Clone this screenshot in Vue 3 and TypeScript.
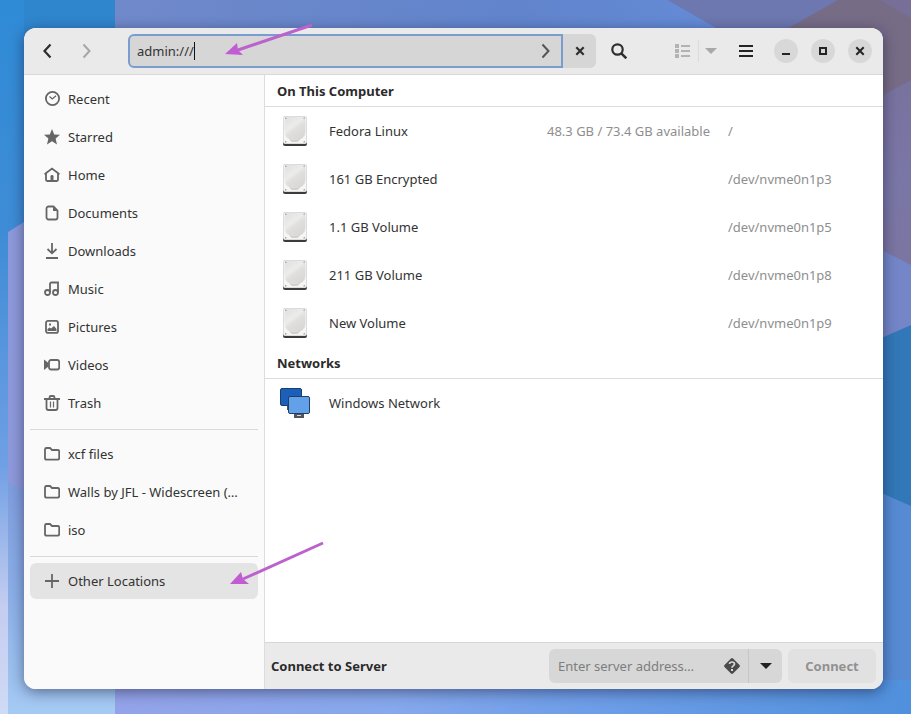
<script setup lang="ts">
import { ref } from 'vue'

interface Place {
  label: string
  icon: string
  active?: boolean
}

interface Volume {
  name: string
  free: string
  path: string
}

const address = ref<string>('admin:///')
const server = ref<string>('')

const placeGroups: Place[][] = [
  [
    { label: 'Recent', icon: 'recent' },
    { label: 'Starred', icon: 'star' },
    { label: 'Home', icon: 'home' },
    { label: 'Documents', icon: 'document' },
    { label: 'Downloads', icon: 'download' },
    { label: 'Music', icon: 'music' },
    { label: 'Pictures', icon: 'picture' },
    { label: 'Videos', icon: 'video' },
    { label: 'Trash', icon: 'trash' },
  ],
  [
    { label: 'xcf files', icon: 'folder' },
    { label: 'Walls by JFL - Widescreen (…', icon: 'folder' },
    { label: 'iso', icon: 'folder' },
  ],
  [{ label: 'Other Locations', icon: 'plus', active: true }],
]

const volumes: Volume[] = [
  { name: 'Fedora Linux', free: '48.3 GB / 73.4 GB available', path: '/' },
  { name: '161 GB Encrypted', free: '', path: '/dev/nvme0n1p3' },
  { name: '1.1 GB Volume', free: '', path: '/dev/nvme0n1p5' },
  { name: '211 GB Volume', free: '', path: '/dev/nvme0n1p8' },
  { name: 'New Volume', free: '', path: '/dev/nvme0n1p9' },
]
</script>

<template>
  <div class="desktop">
    <svg class="wallpaper" viewBox="0 0 911 714" preserveAspectRatio="none" aria-hidden="true">
      <defs>
        <linearGradient id="wall-top" x1="0" x2="1" y1="0" y2="0">
          <stop offset="0" stop-color="#7089ca" />
          <stop offset="0.5" stop-color="#6184cc" />
          <stop offset="0.75" stop-color="#648bd6" />
          <stop offset="1" stop-color="#6d86c4" />
        </linearGradient>
        <linearGradient id="wall-left" x1="0" x2="0" y1="0" y2="1">
          <stop offset="0" stop-color="#2f8bd6" />
          <stop offset="0.33" stop-color="#3f8cd6" />
          <stop offset="0.65" stop-color="#6f9fe4" />
          <stop offset="0.85" stop-color="#c5cdf0" />
          <stop offset="1" stop-color="#cfdaf4" />
        </linearGradient>
        <linearGradient id="wall-left-low" x1="0" x2="0" y1="0" y2="1">
          <stop offset="0" stop-color="#7f9cdc" />
          <stop offset="0.5" stop-color="#8bb0e8" />
          <stop offset="1" stop-color="#a5caf3" />
        </linearGradient>
        <linearGradient id="wall-bottom" x1="0" x2="1" y1="0" y2="0">
          <stop offset="0" stop-color="#94a3e9" />
          <stop offset="0.35" stop-color="#86a8ec" />
          <stop offset="0.55" stop-color="#719fe8" />
          <stop offset="1" stop-color="#5090dc" />
        </linearGradient>
        <linearGradient id="wall-right" x1="0" x2="0" y1="0" y2="1">
          <stop offset="0" stop-color="#776f98" />
          <stop offset="0.5" stop-color="#7a76a6" />
          <stop offset="1" stop-color="#7c7499" />
        </linearGradient>
      </defs>
      <rect width="911" height="714" fill="url(#wall-left)" />
      <path d="M8 232 24 222V500L8 482Z" fill="#8d99da" />
      <path d="M8 482 115 540V714H8Z" fill="url(#wall-left-low)" />
      <path d="M24 0H115V40H24Z" fill="#2f86cd" />
      <path d="M115 0H911V110H115Z" fill="url(#wall-top)" />
      <path d="M668 0H911V370H860V110Z" fill="url(#wall-right)" />
      <path d="M668 0H838L790 30H720Z" fill="#6d78b0" />
      <path d="M838 0H880L911 18V80L883 95V30H785Z" fill="#776c86" />
      <path d="M870 244 911 265V340H870Z" fill="#7486c8" />
      <path d="M870 343 911 325V714H870Z" fill="#3278b8" />
      <path d="M870 488 911 506V714H870Z" fill="#568bd4" />
      <path d="M115 680H911V714H115Z" fill="url(#wall-bottom)" />
    </svg>

    <main class="window">
      <header class="headerbar">
        <button class="flat" type="button" aria-label="Back">
          <svg class="ico" viewBox="0 0 16 16"><path d="M11.500 1.500 5.500 8l6 6.500" fill="none" stroke="#2e2e2e" stroke-width="2.200" /></svg>
        </button>
        <button class="flat dim" type="button" aria-label="Forward" disabled>
          <svg class="ico" viewBox="0 0 16 16"><path d="m4.500 1.500 6 6.500-6 6.500" fill="none" stroke="#a6a6a6" stroke-width="2" /></svg>
        </button>
        <form class="location" @submit.prevent>
          <div class="location-entry">
            <input v-model="address" type="text" aria-label="Location" />
            <span class="caret"></span>
            <button type="submit" aria-label="Go">
              <svg class="ico" viewBox="0 0 16 16"><path d="m4.500 1.500 6 6.500-6 6.500" fill="none" stroke="#555" stroke-width="2" /></svg>
            </button>
          </div>
          <button class="location-close" type="button" aria-label="Cancel">
            <svg class="ico" viewBox="0 0 16 16"><path d="m4.300 4.300 7.400 7.400m0-7.400-7.400 7.400" stroke="#2e2e2e" stroke-width="2.200" /></svg>
          </button>
        </form>
        <button class="flat search" type="button" aria-label="Search">
          <svg class="ico" viewBox="0 0 16 16"><circle cx="6.500" cy="6.500" r="5.200" fill="none" stroke="#2e2e2e" stroke-width="2.200" /><path d="m10.300 10.300 5 5" stroke="#2e2e2e" stroke-width="2.500" /></svg>
        </button>
        <div class="view-switch">
          <button type="button" aria-label="List view" disabled>
            <svg class="ico" viewBox="0 0 16 16" fill="#b3b3b3"><path d="M1 1h4v4H1zM1 6h4v4H1zM1 11h4v4H1zM7 2h9v2H7zM7 7h9v2H7zM7 12h9v2H7z" /></svg>
          </button>
          <button class="view-menu" type="button" aria-label="View options" disabled>
            <svg class="arrow" viewBox="0 0 12 6"><path d="M0 0h12L6 6z" fill="#a9a9a9" /></svg>
          </button>
        </div>
        <button class="flat menu" type="button" aria-label="Menu">
          <svg class="ico" viewBox="0 0 16 16"><path d="M1 3h14M1 8h14M1 13h14" stroke="#242424" stroke-width="2" /></svg>
        </button>
        <div class="window-controls">
          <button type="button" aria-label="Minimize">
            <svg class="ico" viewBox="0 0 16 16"><path d="M4 11h8" stroke="#242424" stroke-width="2" /></svg>
          </button>
          <button type="button" aria-label="Maximize">
            <svg class="ico" viewBox="0 0 16 16"><path d="M5 5h6v6H5z" fill="none" stroke="#242424" stroke-width="2" /></svg>
          </button>
          <button type="button" aria-label="Close">
            <svg class="ico" viewBox="0 0 16 16"><path d="m4.300 4.300 7.400 7.400m0-7.400-7.400 7.400" stroke="#242424" stroke-width="2" /></svg>
          </button>
        </div>
      </header>

      <div class="body">
        <nav class="sidebar" aria-label="Places">
          <ul v-for="(group, g) in placeGroups" :key="g">
            <li v-for="place in group" :key="place.label">
              <a href="#" :class="{ active: place.active }" @click.prevent>
                <svg class="ico" viewBox="0 0 16 16" fill="none" stroke="#666" stroke-width="1.800">
                  <template v-if="place.icon === 'recent'">
                    <circle cx="8.500" cy="7.500" r="6.600" /><path d="m5.500 5.500 2.800 2.500 3.700-3.300" stroke-width="1.300" />
                  </template>
                  <path v-else-if="place.icon === 'star'" d="m8 0 2.200 5.400 5.800.4-4.400 3.700 1.400 5.900-5-3.200-5 3.200 1.400-5.900L0 5.800l5.800-.4z" fill="#666" stroke="none" />
                  <template v-else-if="place.icon === 'home'">
                    <path d="M1.500 6.500 8 1.600l6.500 4.900M.600 7.500 2 6.200v6.300A1.500 1.500 0 0 0 3.500 14h9a1.500 1.500 0 0 0 1.500-1.500V6.200l1.400 1.300" />
                    <path d="M6.500 14V9.200Q6.500 8 8 8t1.500 1.200V14z" fill="#666" stroke="none" />
                  </template>
                  <template v-else-if="place.icon === 'document'">
                    <path d="M4.500 1.500H9.500L13.500 5.500V12.500a2 2 0 0 1-2 2H4.500a2 2 0 0 1-2-2v-9a2 2 0 0 1 2-2z" /><path d="M9 1v5h5z" fill="#666" stroke="none" />
                  </template>
                  <path v-else-if="place.icon === 'download'" d="M8 0v10M3.500 6 8 10.300 12.500 6M2 15h12" />
                  <template v-else-if="place.icon === 'music'">
                    <circle cx="3.500" cy="11.500" r="2.500" /><circle cx="11.500" cy="11.500" r="2.500" />
                    <path d="M6 11.500V3a1.500 1.500 0 0 1 1.500-1.500H14v10" />
                  </template>
                  <template v-else-if="place.icon === 'picture'">
                    <rect x="2" y="1.900" width="12" height="12" rx="2" />
                    <path d="M3.500 12V10l2-1.500 1.500 1 3-2.500 2.500 3v2zM5 4.500h2v2H5z" fill="#666" stroke="none" />
                  </template>
                  <template v-else-if="place.icon === 'video'">
                    <rect x="5" y="3" width="10.200" height="9.500" rx="2" /><path d="M0 2.500 4.500 6v3.500L0 13z" fill="#666" stroke="none" />
                  </template>
                  <template v-else-if="place.icon === 'trash'">
                    <path d="M0 4h16M5.500 3.500V2.500a1.500 1.500 0 0 1 1.500-1.500h2a1.500 1.500 0 0 1 1.500 1.500v1M2.500 4v9a2 2 0 0 0 2 2h7a2 2 0 0 0 2-2V4" /><path d="M6.500 6.500v6M9.500 6.500v6" stroke-width="1.200" />
                  </template>
                  <path v-else-if="place.icon === 'folder'" d="M1 12V3.500A1.500 1.500 0 0 1 2.500 2H6l2 2H14a1.300 1.300 0 0 1 1.200 1.300V12a1.700 1.700 0 0 1-1.700 1.700H2.700A1.700 1.700 0 0 1 1 12z" stroke-width="1.800" />
                  <path v-else d="M8 1v14M1 8h14" />
                </svg>
                <span>{{ place.label }}</span>
              </a>
            </li>
          </ul>
        </nav>

        <section class="content">
          <h2>On This Computer</h2>
          <table aria-label="On This Computer">
            <tbody>
              <tr v-for="volume in volumes" :key="volume.name">
                <td class="icon-cell">
                  <svg class="device" viewBox="0 0 32 32" aria-hidden="true">
                    <defs>
                      <linearGradient id="platter" x1="0" y1="0" x2="0.700" y2="1">
                        <stop offset="0" stop-color="#dfdfde" /><stop offset="0.450" stop-color="#ececeb" /><stop offset="0.600" stop-color="#e0dfde" /><stop offset="1" stop-color="#d8d7d6" />
                      </linearGradient>
                    </defs>
                    <rect x="4" y="4" width="24" height="27" rx="2" fill="#3c3c3c" />
                    <rect x="4" y="1" width="24" height="28" rx="2" fill="#dcdcda" />
                    <rect x="5" y="2" width="22" height="26" rx="1" fill="#f6f6f5" />
                    <path d="M9 2h14q3.500 0 3.500 5v9q0 9-10.500 9T5.500 16V7Q5.500 2 9 2z" fill="url(#platter)" />
                    <path d="M10 24q6 2.500 12-.5l-3 3q-3.500 1.200-7 0z" fill="#cfcecd" />
                    <path d="M6 2.500h1.500V4H6zM24.500 2.500H26V4h-1.500zM6 26h1.500v1.500H6zM24.500 26H26v1.500h-1.500z" fill="#aaa" />
                  </svg>
                </td>
                <td class="name">{{ volume.name }}</td>
                <td class="free">{{ volume.free }}</td>
                <td class="path">{{ volume.path }}</td>
              </tr>
            </tbody>
          </table>
          <h2>Networks</h2>
          <table aria-label="Networks">
            <tbody>
              <tr>
                <td class="icon-cell">
                  <svg class="device" viewBox="0 0 32 32" aria-hidden="true">
                    <path d="M8 19h5v4H8z" fill="#4b5158" />
                    <rect x="1.500" y="1.500" width="21" height="17" rx="1.500" fill="#1c5fb8" stroke="#17406f" />
                    <path d="M15 27h10v4H15z" fill="#50565c" /><path d="M18 28h4v1h-4z" fill="#d5d8dc" />
                    <rect x="9.500" y="9.500" width="21" height="17" rx="1.500" fill="#62a0ea" stroke="#1d3f69" />
                  </svg>
                </td>
                <td class="name">Windows Network</td>
                <td class="free"></td>
                <td class="path"></td>
              </tr>
            </tbody>
          </table>
          <form class="connect-bar" @submit.prevent>
            <label for="server-address">Connect to Server</label>
            <div class="server">
              <input id="server-address" v-model="server" type="text" placeholder="Enter server address…" />
              <button class="help" type="button" aria-label="Address help">
                <svg class="ico" viewBox="0 0 16 16"><path d="M7 .5q1-.9 2 0L15.500 7q.9 1 0 2L9 15.500q-1 .9-2 0L.500 9q-.9-1 0-2z" fill="#4a4a4a" /><path d="M5.500 6q.2-2 2.500-2t2.500 2q0 1-1.300 1.900Q8.100 8.600 8 9.800" fill="none" stroke="#dadada" stroke-width="1.700" /><path d="M7 11h2v2H7z" fill="#dadada" /></svg>
              </button>
              <button class="recent-servers" type="button" aria-label="Recent servers">
                <svg class="arrow" viewBox="0 0 12 6"><path d="M0 0h12L6 6z" fill="#222" /></svg>
              </button>
            </div>
            <button class="connect" type="submit" disabled>Connect</button>
          </form>
        </section>
      </div>
    </main>

    <svg class="pointer pointer-top" viewBox="0 0 90 36" aria-hidden="true">
      <path d="M88 3 14 28" stroke="#bb62cc" stroke-width="3" /><path d="M1 32 13 21l1 7 5 5z" fill="#c25cd2" />
    </svg>
    <svg class="pointer pointer-bottom" viewBox="0 0 96 46" aria-hidden="true">
      <path d="M94 2 14 38" stroke="#bb62cc" stroke-width="3" /><path d="M1 43 12 31l2 7 6 5z" fill="#c25cd2" />
    </svg>
  </div>
</template>

<style>
body {
  margin: 0;
}
</style>

<style scoped>
.desktop {
  position: relative;
  display: flex;
  box-sizing: border-box;
  min-height: 100vh;
  padding: 28px 28px 25px 24px;
  overflow: hidden;
  font-family: "Noto Sans", sans-serif;
  font-size: 13px;
  line-height: 18px;
  color: #333;
}
.wallpaper {
  position: absolute;
  inset: 0;
  width: 100%;
  height: 100%;
}
.window {
  position: relative;
  display: flex;
  flex: 1;
  flex-direction: column;
  min-width: 0;
  overflow: hidden;
  background: #fff;
  border-radius: 12px;
  box-shadow: 0 3px 14px rgba(20, 20, 50, 0.5);
}
button,
input {
  min-width: 0;
  padding: 0;
  border: 0;
  background: none;
  color: inherit;
  font: inherit;
}
button {
  display: flex;
  align-items: center;
  justify-content: center;
}
.ico {
  flex: none;
  width: 16px;
  height: 16px;
}
.arrow {
  width: 12px;
  height: 6px;
}
.headerbar {
  display: flex;
  align-items: center;
  height: 46px;
  padding: 0 11px 0 6px;
  background: #eaeaea;
  border-bottom: 1px solid #d9d9d9;
}
.flat {
  width: 34px;
  height: 34px;
}
.flat.dim {
  margin-left: 6px;
}
.location {
  display: flex;
  flex: 1;
  height: 34px;
  margin-left: 24px;
}
.location-entry {
  display: flex;
  flex: 1;
  align-items: center;
  padding: 0 7px;
  background: #d6d6d6;
  border: 2px solid #7a9dd0;
  border-radius: 6px 0 0 6px;
}
.location-entry input {
  field-sizing: content;
  outline: 0;
}
.caret {
  width: 1px;
  height: 18px;
  background: #111;
}
.location-entry button {
  margin-left: auto;
}
.location-close {
  width: 33px;
  background: #d6d6d6;
  border-radius: 0 6px 6px 0;
}
.search {
  margin-left: 6px;
}
.view-switch {
  display: flex;
  align-items: center;
  margin-left: 38px;
}
.view-switch button {
  height: 22px;
}
.view-switch .view-menu {
  width: 24px;
  margin-left: 8px;
  border-left: 1px solid #dadada;
}
.menu {
  margin-left: 7px;
}
.window-controls {
  display: flex;
  gap: 13px;
  margin-left: 11px;
}
.window-controls button {
  width: 24px;
  height: 24px;
  border-radius: 50%;
  background: #d8d8d8;
}
.body {
  display: flex;
  flex: 1;
}
.sidebar {
  box-sizing: border-box;
  flex: none;
  width: 241px;
  padding: 6px;
  background: #fafafa;
  border-right: 1px solid #dcdcdc;
}
.sidebar ul {
  display: flex;
  flex-direction: column;
  gap: 2px;
  margin: 0;
  padding: 0;
  list-style: none;
}
.sidebar ul + ul {
  margin-top: 8px;
  padding-top: 6px;
  border-top: 1px solid #d9d9d9;
}
.sidebar a {
  display: flex;
  align-items: center;
  gap: 8px;
  height: 36px;
  padding: 0 14px;
  border-radius: 6px;
  color: inherit;
  text-decoration: none;
}
.sidebar a.active {
  background: #e4e4e4;
}
.sidebar span {
  white-space: nowrap;
}
.content {
  display: flex;
  flex: 1;
  flex-direction: column;
  min-width: 0;
}
h2 {
  margin: 0;
  padding: 7px 12px 6px;
  border-bottom: 1px solid #dcdcdc;
  color: #2b2b2b;
  font-size: 13px;
  font-weight: 700;
}
table {
  width: 100%;
  border-collapse: collapse;
  table-layout: fixed;
}
td {
  height: 48px;
  padding: 0;
}
.icon-cell {
  width: 64px;
}
.device {
  display: block;
  width: 32px;
  height: 32px;
  margin-left: 14px;
}
.free {
  width: 200px;
  padding-right: 18px;
  color: #8e8e8e;
  text-align: right;
}
.path {
  width: 155px;
  color: #8e8e8e;
}
.connect-bar {
  display: flex;
  align-items: center;
  height: 46px;
  margin-top: auto;
  padding: 0 7px 0 6px;
  background: #eaeaea;
  border-top: 1px solid #d6d6d6;
}
.connect-bar label {
  flex: 1;
  color: #2b2b2b;
  font-weight: 700;
}
.server {
  display: flex;
  width: 233px;
  height: 34px;
  background: #d7d7d7;
  border-radius: 6px;
}
.server input {
  flex: 1;
  padding-left: 9px;
}
.server input::placeholder {
  color: #7d7d7d;
  opacity: 1;
}
.help {
  width: 16px;
  margin-right: 8px;
}
.recent-servers {
  width: 34px;
  border-left: 1px solid #c6c6c6;
}
.connect {
  width: 88px;
  height: 34px;
  margin-left: 6px;
  background: #e1e1e1;
  border-radius: 6px;
  color: #919191;
  font-weight: 700;
}
.pointer {
  position: absolute;
  fill: none;
}
.pointer-top {
  top: 22px;
  left: 224px;
  width: 90px;
  height: 36px;
}
.pointer-bottom {
  top: 541px;
  left: 229px;
  width: 96px;
  height: 46px;
}
</style>
